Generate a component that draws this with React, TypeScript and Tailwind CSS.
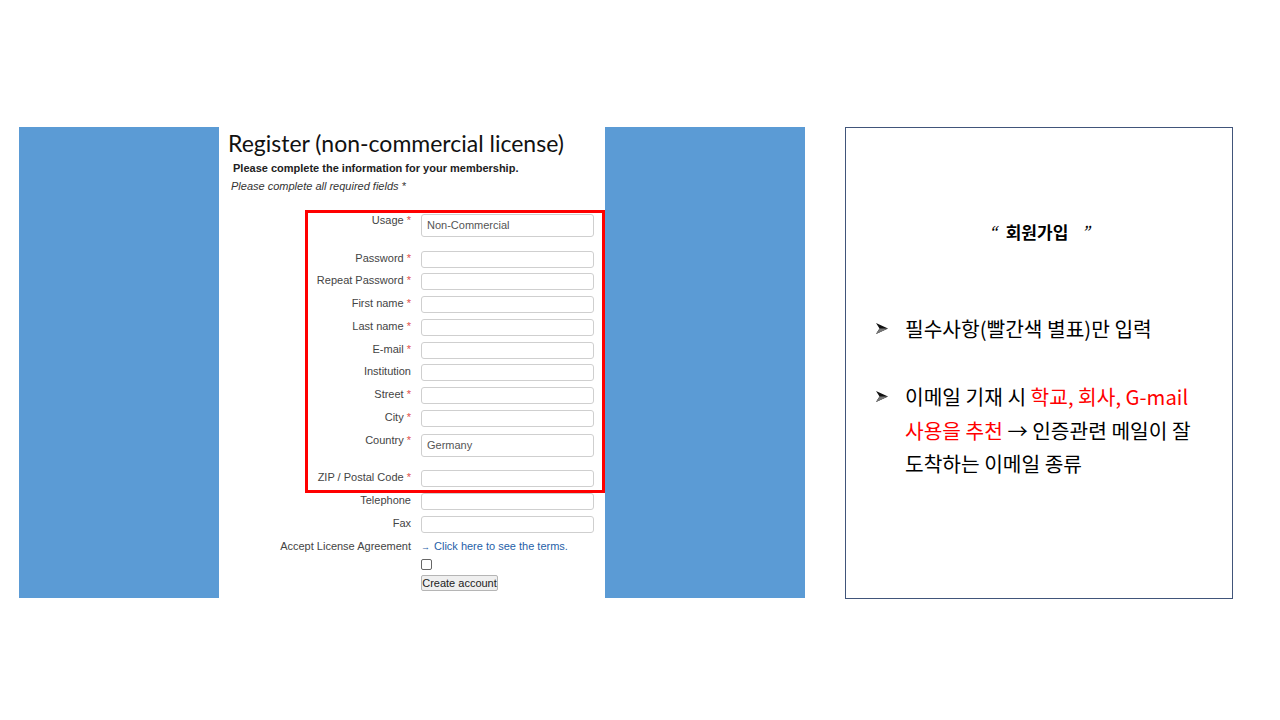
const REQ = <span className="text-[#e0504a]"> *</span>;

type Row = { label: string; req?: boolean; value?: string; tall?: boolean };

const rows: Row[] = [
  { label: "Usage", req: true, value: "Non-Commercial", tall: true },
  { label: "Password", req: true },
  { label: "Repeat Password", req: true },
  { label: "First name", req: true },
  { label: "Last name", req: true },
  { label: "E-mail", req: true },
  { label: "Institution" },
  { label: "Street", req: true },
  { label: "City", req: true },
  { label: "Country", req: true, value: "Germany", tall: true },
  { label: "ZIP / Postal Code", req: true },
  { label: "Telephone" },
  { label: "Fax" },
];

const FormRow = ({ row }: { row: Row }) => (
  <div className={row.tall ? "flex h-[37.5px]" : "flex h-[22.8px]"}>
    <div className="w-[192px] text-right text-[11px] leading-[14px] text-[#444]">
      {row.label}
      {row.req && REQ}
    </div>
    <div
      className={
        "ml-[10px] w-[173px] rounded-[3px] border border-[#cfcfcf] bg-white px-[5px] text-[11px] text-[#555] flex items-center " +
        (row.tall ? "mt-[1px] h-[23px]" : "h-[17px]")
      }
    >
      {row.value}
    </div>
  </div>
);

const Bullet = () => (
  <svg width="12" height="11" viewBox="0 0 12 11" className="mt-[11px] shrink-0">
    <polygon points="0,0 12,5.5 0,11 3.5,5.5" fill="#111" />
    <polygon points="0,11 3.5,5.5 12,5.5" fill="#777" />
  </svg>
);

const FormShot = () => (
  <div
    className="relative w-[386px] bg-white"
    style={{ fontFamily: "'Liberation Sans', Arial, sans-serif" }}
  >
    <h1
      className="ml-[9px] mt-[2px] text-[23px] leading-[28px] text-[#111]"
      style={{ fontFamily: "Lato, 'Open Sans', sans-serif" }}
    >
      Register (non-commercial license)
    </h1>
    <p className="ml-[14px] mt-[4px] text-[11px] font-bold leading-[14px] text-[#222]">
      Please complete the information for your membership.
    </p>
    <p className="ml-[12px] mt-[4px] text-[11px] italic leading-[14px] text-[#333]">
      Please complete all required fields *
    </p>
    <div className="mt-[20px] flex flex-col">
      {rows.map((r) => (
        <FormRow key={r.label} row={r} />
      ))}
      <div className="flex">
        <div className="w-[192px] text-right text-[11px] leading-[14px] text-[#444]">
          Accept License Agreement
        </div>
        <div className="ml-[10px] text-[11px] leading-[14px] text-[#1f5fa8]">
          <span className="text-[9px] mr-[4px]">→</span>Click here to see the terms.
        </div>
      </div>
      <div className="ml-[202px] mt-[5px] h-[11px] w-[11px] rounded-[2px] border border-[#666] bg-white" />
      <button className="ml-[202px] mt-[5px] h-[16px] w-[77px] whitespace-nowrap rounded-[2px] border border-[#b5b5b5] bg-[#efefef] text-[11px] leading-[14px] text-[#222]">
        Create account
      </button>
    </div>
    {/* red annotation box */}
    <div className="absolute left-[86px] top-[83px] h-[283px] w-[300px] border-[3px] border-[#ff0000]" />
  </div>
);

export default function App() {
  return (
    <div className="relative h-[720px] w-[1280px] bg-white">
      <div className="flex pt-[127px]">
        <div className="ml-[19px] flex h-[471px] w-[786px] bg-[#5b9bd5]">
          <div className="w-[200px]" />
          <FormShot />
        </div>
        <div
          className="ml-[40px] h-[472px] w-[388px] border border-[#41557a] bg-white"
          style={{ fontFamily: "'Noto Sans CJK KR', 'Noto Sans', sans-serif" }}
        >
          <div className="mt-[91px] flex justify-center text-[17px] font-bold leading-[26px] text-black">
            <span className="font-normal italic">“</span>
            <span className="ml-[9px] mr-[13px]">회원가입</span>
            <span className="font-normal italic">”</span>
          </div>
          <div className="ml-[30px] mt-[67px] text-[20.3px] leading-[33.5px] text-black">
            <div className="flex">
              <div className="w-[29px] shrink-0">
                <Bullet />
              </div>
              <span>필수사항(빨간색 별표)만 입력</span>
            </div>
            <div className="mt-[34.5px] flex">
              <div className="w-[29px] shrink-0">
                <Bullet />
              </div>
              <span>
                이메일 기재 시 <span className="text-[#ff0000]">학교, 회사, G-mail</span>
                <br />
                <span className="text-[#ff0000]">사용을 추천</span> → 인증관련 메일이 잘
                <br />
                도착하는 이메일 종류
              </span>
            </div>
          </div>
        </div>
      </div>
    </div>
  );
}
